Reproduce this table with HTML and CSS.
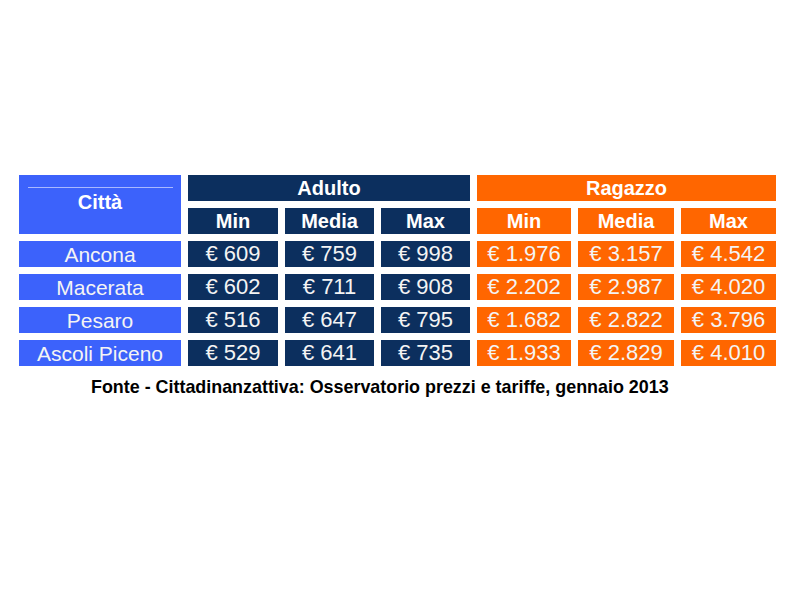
FILE: index.html
```html
<!DOCTYPE html>
<html lang="it">
<head>
<meta charset="utf-8">
<title>Tariffe</title>
<link rel="stylesheet" href="styles.css">
</head>
<body>
<div class="page">
  <div class="grid">
    <div class="cell city-head"><span class="rule"></span><span class="city-label">Città</span></div>
    <div class="cell navy group head">Adulto</div>
    <div class="cell orange group head">Ragazzo</div>

    <div class="cell navy head">Min</div>
    <div class="cell navy head">Media</div>
    <div class="cell navy head">Max</div>
    <div class="cell orange head">Min</div>
    <div class="cell orange head">Media</div>
    <div class="cell orange head">Max</div>

    <div class="cell blue">Ancona</div>
    <div class="cell navy">€ 609</div>
    <div class="cell navy">€ 759</div>
    <div class="cell navy">€ 998</div>
    <div class="cell orange">€ 1.976</div>
    <div class="cell orange">€ 3.157</div>
    <div class="cell orange">€ 4.542</div>

    <div class="cell blue">Macerata</div>
    <div class="cell navy">€ 602</div>
    <div class="cell navy">€ 711</div>
    <div class="cell navy">€ 908</div>
    <div class="cell orange">€ 2.202</div>
    <div class="cell orange">€ 2.987</div>
    <div class="cell orange">€ 4.020</div>

    <div class="cell blue">Pesaro</div>
    <div class="cell navy">€ 516</div>
    <div class="cell navy">€ 647</div>
    <div class="cell navy">€ 795</div>
    <div class="cell orange">€ 1.682</div>
    <div class="cell orange">€ 2.822</div>
    <div class="cell orange">€ 3.796</div>

    <div class="cell blue">Ascoli Piceno</div>
    <div class="cell navy">€ 529</div>
    <div class="cell navy">€ 641</div>
    <div class="cell navy">€ 735</div>
    <div class="cell orange">€ 1.933</div>
    <div class="cell orange">€ 2.829</div>
    <div class="cell orange">€ 4.010</div>
  </div>
  <p class="source">Fonte - Cittadinanzattiva: Osservatorio prezzi e tariffe, gennaio 2013</p>
</div>
</body>
</html>
```
FILE: styles.css
```css
html, body {
  margin: 0;
  padding: 0;
  background: #ffffff;
}

.page {
  width: 800px;
  height: 600px;
  padding: 175px 0 0 19px;
  box-sizing: border-box;
  font-family: "Liberation Sans", Arial, sans-serif;
}

.grid {
  display: grid;
  grid-template-columns: 162px 90px 89px 89px 94px 96px 95px;
  grid-template-rows: repeat(6, 26px);
  column-gap: 7px;
  row-gap: 7px;
}

.cell {
  display: flex;
  align-items: center;
  justify-content: center;
  color: #f4f4f4;
  font-size: 22px;
  line-height: 1;
  white-space: nowrap;
}

.blue { background: #3c62fb; font-size: 21px; }
.navy { background: #0c2f5e; }
.orange { background: #ff6600; }

.head {
  font-weight: bold;
  font-size: 20px;
  color: #ffffff;
}

.group { grid-column: span 3; }

.city-head {
  grid-row: span 2;
  background: #3c62fb;
  flex-direction: column;
  justify-content: flex-start;
  padding-top: 12px;
  box-sizing: border-box;
  font-weight: bold;
  font-size: 20px;
  color: #ffffff;
}

.rule {
  display: block;
  width: 145px;
  height: 1px;
  background: #a9b9ff;
}

.city-label {
  display: block;
  margin-top: 4px;
}

.source {
  margin: 11px 0 0 72px;
  font-weight: bold;
  font-size: 17.9px;
  color: #000000;
  line-height: 20px;
}
```
